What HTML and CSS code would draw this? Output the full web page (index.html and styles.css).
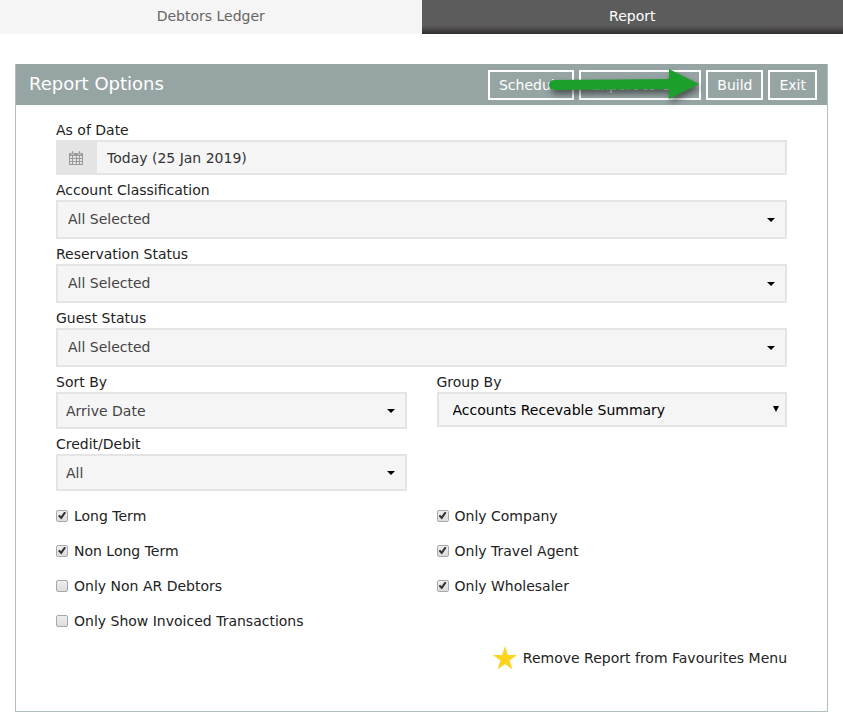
FILE: index.html
```html
<!DOCTYPE html>
<html lang="en">
<head>
  <meta charset="UTF-8">
  <meta name="viewport" content="width=device-width, initial-scale=1.0">
  <title>Debtors Ledger</title>
  <link rel="stylesheet" href="styles.css">
</head>
<body>
  <nav class="tabs">
    <a class="tab" href="#">Debtors Ledger</a>
    <a class="tab tab-active" href="#">Report</a>
  </nav>

  <form class="panel">
    <div class="panel-header">
      <h1>Report Options</h1>
      <div class="actions">
        <button type="button">Schedule</button>
        <button type="button" class="export-btn">Export to CSV</button>
        <button type="button">Build</button>
        <button type="button">Exit</button>
        <svg class="arrow" width="152" height="32" viewBox="0 0 152 32" aria-hidden="true">
          <path d="M6 11 L121 10 V0 L151 15 L121 30 V20 L6 21 A5 5 0 0 1 6 11Z" fill="#1d9f2c"/>
        </svg>
      </div>
    </div>

    <div class="panel-body">
      <div class="field">
        <label for="as-of-date">As of Date</label>
        <div class="date-box">
          <span class="date-icon">
            <svg width="14" height="14" viewBox="0 0 14 14" aria-hidden="true">
              <path d="M0 2h14v12H0z" fill="#999999"/>
              <path d="M1 5h2v2H1zM4 5h3v2H4zM8 5h2v2H8zM11 5h2v2h-2zM1 8h2v2H1zM4 8h3v2H4zM8 8h2v2H8zM11 8h2v2h-2zM1 11h2v2H1zM4 11h3v2H4zM8 11h2v2H8zM11 11h2v2h-2z" fill="#e4e4e4"/>
              <path d="M2.500 0h2v3.500h-2zM9.500 0h2v3.500h-2z" fill="#999999" stroke="#e4e4e4" stroke-width=".5"/>
            </svg>
          </span>
          <input type="text" id="as-of-date" value="Today (25 Jan 2019)">
        </div>
      </div>

      <div class="field">
        <label for="classification">Account Classification</label>
        <div class="select-box select-tall">
          <select id="classification"><option>All Selected</option></select>
        </div>
      </div>

      <div class="field">
        <label for="reservation">Reservation Status</label>
        <div class="select-box select-tall">
          <select id="reservation"><option>All Selected</option></select>
        </div>
      </div>

      <div class="field">
        <label for="guest">Guest Status</label>
        <div class="select-box select-tall">
          <select id="guest"><option>All Selected</option></select>
        </div>
      </div>

      <div class="columns">
        <div class="field">
          <label for="sort-by">Sort By</label>
          <div class="select-box">
            <select id="sort-by"><option>Arrive Date</option></select>
          </div>
        </div>
        <div class="field">
          <label for="group-by">Group By</label>
          <div class="select-box select-plain">
            <select id="group-by"><option>Accounts Recevable Summary</option></select>
          </div>
        </div>
        <div class="field">
          <label for="credit-debit">Credit/Debit</label>
          <div class="select-box">
            <select id="credit-debit"><option>All</option></select>
          </div>
        </div>
      </div>

      <div class="columns checks">
        <div>
          <label class="check"><input type="checkbox" checked>Long Term</label>
          <label class="check"><input type="checkbox" checked>Non Long Term</label>
          <label class="check"><input type="checkbox">Only Non AR Debtors</label>
          <label class="check"><input type="checkbox">Only Show Invoiced Transactions</label>
        </div>
        <div>
          <label class="check"><input type="checkbox" checked>Only Company</label>
          <label class="check"><input type="checkbox" checked>Only Travel Agent</label>
          <label class="check"><input type="checkbox" checked>Only Wholesaler</label>
        </div>
      </div>

      <a class="favourite" href="#">
        <svg width="24" height="24" viewBox="0 0 24 24" aria-hidden="true">
          <path d="M12 0l2.900 8.900H24l-7.400 5.500 2.900 9.100L12 18l-7.500 5.500 2.900-9.100L0 8.900h9.100z" fill="#fdd31d"/>
        </svg>
        Remove Report from Favourites Menu
      </a>
    </div>
  </form>
</body>
</html>
```
FILE: styles.css
```css
* {
  box-sizing: border-box;
}
body {
  margin: 0;
  background-color: #ffffff;
  color: #222222;
  font-family: Verdana, "DejaVu Sans", sans-serif;
  font-size: 14px;
  line-height: 20px;
}
a {
  color: inherit;
  text-decoration: none;
}
button, input, select {
  font: inherit;
}

/* Tabs */
.tabs {
  display: flex;
  height: 34px;
}
.tab {
  flex: 1;
  padding-top: 6px;
  background-color: #f5f5f5;
  color: #666666;
  text-align: center;
}
.tab-active {
  background: linear-gradient(#5c5c5c 75%, #332d30);
  color: #ffffff;
}

/* Panel */
.panel {
  margin: 30px 15px 9px;
  border: 1px solid #b0bebc;
  border-top: none;
}
.panel-header {
  display: flex;
  align-items: center;
  justify-content: space-between;
  height: 41px;
  padding: 0 10px 0 13px;
  background-color: #96a5a4;
  color: #ffffff;
}
.panel-header h1 {
  margin: 0;
  padding-bottom: 2px;
  font-size: 18px;
  font-weight: normal;
}
.actions {
  position: relative;
  display: flex;
  gap: 5px;
}
.actions button {
  height: 30px;
  padding: 0 9px;
  border: 2px solid #ffffff;
  background: none;
  color: #ffffff;
  cursor: pointer;
}
.actions .export-btn {
  min-width: 122px;
}
.arrow {
  position: absolute;
  top: -1px;
  right: 117px;
  overflow: visible;
  filter: drop-shadow(2px 4px 3px rgba(0, 0, 0, 0.5));
  pointer-events: none;
}
.panel-body {
  padding: 10px 40px 37px;
}

/* Fields */
.field {
  padding-top: 5px;
}
.field label {
  display: block;
}
.date-box {
  display: flex;
  height: 35px;
  border: 2px solid #e4e4e4;
  background-color: #f5f5f5;
}
.date-icon {
  display: flex;
  align-items: center;
  justify-content: center;
  width: 39px;
  padding-right: 4px;
  background-color: #e4e4e4;
}
.date-box input {
  flex: 1;
  min-width: 0;
  padding: 0 10px;
  border: none;
  background: none;
  color: #333333;
}
.select-box {
  position: relative;
  height: 37px;
}
.select-box select {
  width: 100%;
  height: 100%;
  padding: 0 30px 0 8px;
  border: 2px solid #e4e4e4;
  border-radius: 0;
  background-color: #f5f5f5;
  color: #444444;
  appearance: none;
}
.select-box::after {
  content: "";
  position: absolute;
  top: 17px;
  right: 12px;
  border: 4px solid transparent;
  border-top-color: #000000;
  border-bottom: none;
  pointer-events: none;
}
.select-tall {
  height: 39px;
}
.select-tall select {
  padding-left: 10px;
  padding-bottom: 2px;
}
.select-tall::after {
  top: 18px;
}
.select-plain {
  height: 35px;
}
.select-plain select {
  padding-left: 14px;
  color: #000000;
}
.select-plain::after {
  top: 14px;
  right: 8px;
  border-width: 6px 3px 0;
}
.columns {
  display: grid;
  grid-template-columns: 1fr 1fr;
  column-gap: 30px;
}

/* Checkboxes */
.checks {
  padding-top: 7px;
}
.check {
  display: flex;
  align-items: center;
  gap: 6px;
  height: 35px;
}
.check input {
  position: relative;
  width: 12px;
  height: 12px;
  margin: 0;
  border: 1px solid #a9a9a9;
  border-radius: 2px;
  background: linear-gradient(#eeeeee, #dcdcdc);
  appearance: none;
}
/* the tick */
.check input:checked::after {
  content: "";
  position: absolute;
  inset: 1px;
  background-color: #333333;
  clip-path: polygon(0 55%, 20% 40%, 38% 58%, 80% 0, 100% 15%, 42% 100%);
}

.favourite {
  display: flex;
  align-items: center;
  justify-content: flex-end;
  gap: 6px;
  height: 32px;
  margin-top: 4px;
}
```
